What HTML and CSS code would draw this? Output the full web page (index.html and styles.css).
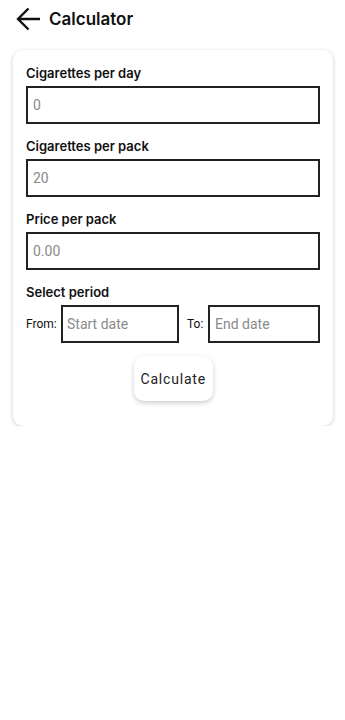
FILE: index.html
```html
<!DOCTYPE html>
<html lang="en">
<head>
    <meta charset="UTF-8">
    <meta name="viewport" content="width=device-width, initial-scale=1.0">
    <title>Calculator</title>
    <link rel="stylesheet" href="styles.css">
</head>
<body>
    <!-- Barra superior -->
    <div class="toolbar">
        <svg class="back" width="26" height="26" viewBox="0 0 26 26">
            <path d="M25 13H3M13.5 2.5L3 13L13.5 23.5" fill="none" stroke="#111" stroke-width="2.4"/>
        </svg>
        <span class="titulo">Calculator</span>
    </div>

    <!-- Tarjeta con el formulario -->
    <div class="tarjeta">
        <div class="form-group">
            <label for="porDia">Cigarettes per day</label>
            <input type="text" id="porDia" placeholder="0">
        </div>
        <div class="form-group">
            <label for="porPaquete">Cigarettes per pack</label>
            <input type="text" id="porPaquete" placeholder="20">
        </div>
        <div class="form-group">
            <label for="precio">Price per pack</label>
            <input type="text" id="precio" placeholder="0.00">
        </div>
        <div class="form-group">
            <label>Select period</label>
            <div class="periodo">
                <span class="mini">From:</span>
                <input type="text" class="desde" placeholder="Start date">
                <span class="mini">To:</span>
                <input type="text" class="hasta" placeholder="End date">
            </div>
        </div>
        <div class="acciones">
            <button type="button">Calculate</button>
        </div>
    </div>
</body>
</html>
```

FILE: styles.css
```css
body {
    margin: 0;
    background-color: white;
    font-family: Inter, "Noto Sans", sans-serif;
    color: #111;
}
.toolbar {
    display: flex;
    align-items: center;
    height: 38px;
    padding-left: 15px;
}
.back {
    margin-right: 8px;
}
.titulo {
    font-size: 17px;
    font-weight: 600;
}
.tarjeta {
    margin: 12px 12px 0 13px;
    padding: 15px 13px 25px 13px;
    background-color: white;
    border-radius: 10px;
    box-shadow: 0 1px 4px rgba(0,0,0,0.2);
}
.form-group {
    margin-bottom: 14px;
}
label {
    display: block;
    font-size: 13px;
    font-weight: 600;
    line-height: 16px;
    margin-bottom: 5px;
}
input {
    display: block;
    width: 100%;
    height: 38px;
    box-sizing: border-box;
    border: 2px solid #222;
    padding: 0 5px;
    font-family: Roboto, sans-serif;
    font-size: 14px;
    color: #333;
    outline: none;
}
input::placeholder {
    color: #8a8a8a;
}
.periodo {
    display: flex;
    align-items: center;
}
.periodo .mini {
    font-family: Roboto, sans-serif;
    font-size: 12px;
    width: 35px;
    flex: none;
}
.periodo input.hasta {
    width: 112px;
    flex: none;
}
.periodo input.desde {
    width: 118px;
    flex: none;
    margin-right: 8px;
    padding-left: 4px;
}
.periodo .mini:nth-of-type(2) {
    width: 21px;
}
.acciones {
    display: flex;
    justify-content: center;
    margin-top: -1px;
}
button {
    background-color: white;
    border: none;
    border-radius: 10px;
    padding: 0 7px;
    height: 45px;
    width: 79px;
    font-family: Roboto, sans-serif;
    font-size: 14px;
    letter-spacing: 0.8px;
    color: #222;
    box-shadow: 0 2px 5px rgba(0,0,0,0.2);
}
```
